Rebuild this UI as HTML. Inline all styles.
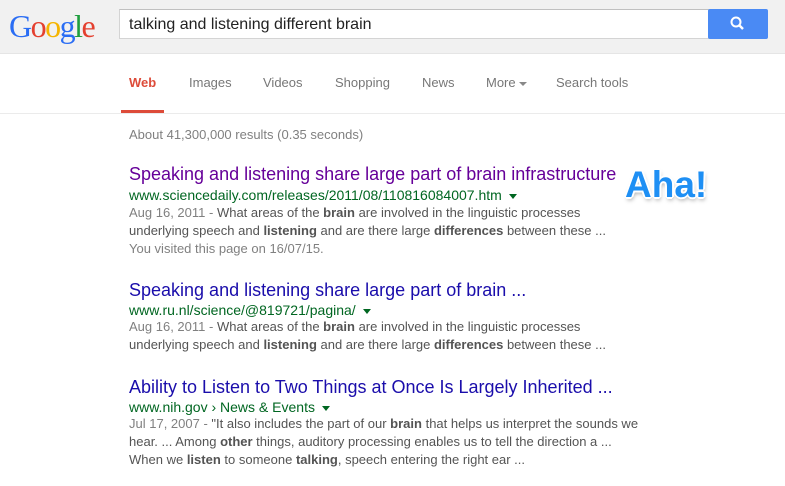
<!DOCTYPE html>
<html><head><meta charset="utf-8"><style>
body{margin:0;width:785px;height:486px;background:#fff;font-family:"Liberation Sans",Arial,sans-serif;position:relative;overflow:hidden}
.hdr{position:absolute;left:0;top:0;width:785px;height:53px;background:#f1f1f1;border-bottom:1px solid #e5e5e5}
.logo{position:absolute;left:9px;top:8px;font-family:"Liberation Serif",serif;font-size:32px;letter-spacing:-1.5px}
.box{position:absolute;left:119px;top:9px;width:588px;height:28px;background:#fff;border:1px solid #d4d4d4;border-top-color:#c0c0c0}
.box span{position:absolute;left:9px;top:6px;font-size:16px;color:#222}
.btn{position:absolute;left:708px;top:9px;width:60px;height:30px;border-radius:2px;background:#4a8af4}
.nav{position:absolute;top:75px;font-size:13px;color:#777}
.navline{position:absolute;left:0;top:113px;width:785px;height:1px;background:#ebebeb}
.t{position:absolute;left:129px;font-size:18px;white-space:nowrap}
.u{position:absolute;left:129px;font-size:14px;color:#006621;white-space:nowrap}
.s{position:absolute;left:129px;font-size:13px;color:#545454;white-space:nowrap}
.s b{color:#545454}
.d{color:#808080}
.tri{display:inline-block;width:0;height:0;border-left:4px solid transparent;border-right:4px solid transparent;border-top:5px solid #006621;vertical-align:middle;margin-left:7px}
.aha{position:absolute;left:625px;top:164px;font-size:37px;font-weight:bold;color:#1e8ff4;text-shadow:-1px -1px 0 #fff,1px -1px 0 #fff,-1px 1px 0 #fff,1px 1px 0 #fff,0 2px 0 #fff,0 -2px 0 #fff,2px 0 0 #fff,-2px 0 0 #fff,1px 3px 4px rgba(0,0,0,.35)}
</style></head><body>
<div class="hdr"></div>
<div class="logo"><span style="color:#2a6df4">G</span><span style="color:#e4402f">o</span><span style="color:#f5b400">o</span><span style="color:#2a6df4">g</span><span style="color:#1e9e3e">l</span><span style="color:#e4402f">e</span></div>
<div class="box"><span>talking and listening different brain</span></div>
<div class="btn"><svg width="60" height="30"><circle cx="28" cy="13" r="4.5" fill="none" stroke="#fff" stroke-width="2"/><line x1="31" y1="16" x2="35" y2="20" stroke="#fff" stroke-width="2.5"/></svg></div>
<div class="nav" style="left:129px;color:#dd4b39;font-weight:bold">Web</div>
<div style="position:absolute;left:121px;top:110px;width:43px;height:3px;background:#dd4b39"></div>
<div class="nav" style="left:189px">Images</div>
<div class="nav" style="left:263px">Videos</div>
<div class="nav" style="left:335px">Shopping</div>
<div class="nav" style="left:422px">News</div>
<div class="nav" style="left:486px">More <span style="display:inline-block;border-left:4px solid transparent;border-right:4px solid transparent;border-top:4px solid #888;vertical-align:middle"></span></div>
<div class="nav" style="left:556px">Search tools</div>
<div class="navline"></div>
<div class="s" style="top:127px;color:#808080">About 41,300,000 results (0.35 seconds)</div>

<div class="t" style="top:164px;color:#609">Speaking and listening share large part of brain infrastructure</div>
<div class="u" style="top:187px">www.sciencedaily.com/releases/2011/08/110816084007.htm<span class="tri"></span></div>
<div class="s" style="top:205px"><span class="d">Aug 16, 2011 - </span>What areas of the <b>brain</b> are involved in the linguistic processes</div>
<div class="s" style="top:223px">underlying speech and <b>listening</b> and are there large <b>differences</b> between these ...</div>
<div class="s" style="top:241px;color:#808080">You visited this page on 16/07/15.</div>
<div class="aha">Aha!</div>

<div class="t" style="top:280px;color:#1a0dab">Speaking and listening share large part of brain ...</div>
<div class="u" style="top:302px">www.ru.nl/science/@819721/pagina/<span class="tri"></span></div>
<div class="s" style="top:319px"><span class="d">Aug 16, 2011 - </span>What areas of the <b>brain</b> are involved in the linguistic processes</div>
<div class="s" style="top:337px">underlying speech and <b>listening</b> and are there large <b>differences</b> between these ...</div>

<div class="t" style="top:377px;color:#1a0dab">Ability to Listen to Two Things at Once Is Largely Inherited ...</div>
<div class="u" style="top:399px">www.nih.gov › News &amp; Events<span class="tri"></span></div>
<div class="s" style="top:416px"><span class="d">Jul 17, 2007 - </span>"It also includes the part of our <b>brain</b> that helps us interpret the sounds we</div>
<div class="s" style="top:434px">hear. ... Among <b>other</b> things, auditory processing enables us to tell the direction a ...</div>
<div class="s" style="top:452px">When we <b>listen</b> to someone <b>talking</b>, speech entering the right ear ...</div>
</body></html>
